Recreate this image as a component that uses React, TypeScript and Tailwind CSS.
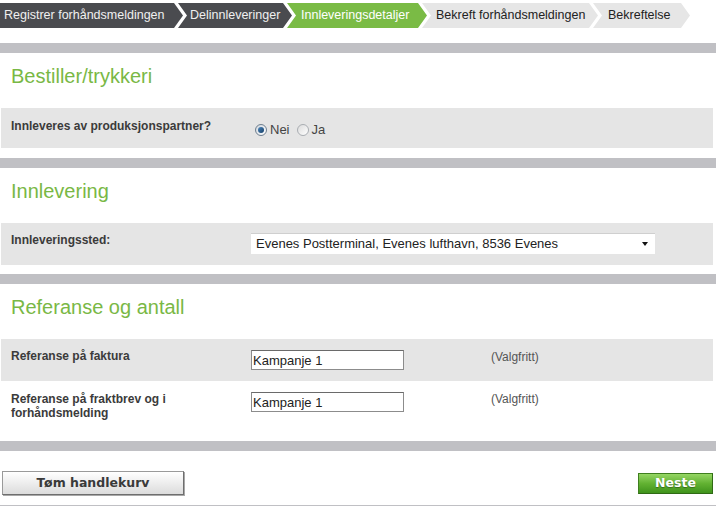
const steps = [
  { label: 'Registrer forhåndsmeldingen', w: 'w-[183px]', pl: 'pl-[4px]', tone: 'dark', first: true },
  { label: 'Delinnleveringer', w: 'w-[114px]', pl: 'pl-[12px]', tone: 'dark' },
  { label: 'Innleveringsdetaljer', w: 'w-[140px]', pl: 'pl-[14px]', tone: 'active' },
  { label: 'Bekreft forhåndsmeldingen', w: 'w-[176px]', pl: 'pl-[14px]', tone: 'todo' },
  { label: 'Bekreftelse', w: 'w-[97px]', pl: 'pl-[15px]', tone: 'todo' },
]

const toneClass: Record<string, string> = {
  dark: 'bg-[#4a4b4f] text-[#f0f0f0]',
  active: 'bg-[#7abb45] text-white',
  todo: 'bg-[#e6e6e6] text-[#222]',
}

function Steps() {
  return (
    <div className="mt-[3px] flex h-[25px]">
      {steps.map((s) => (
        <div
          key={s.label}
          className={`flex h-full shrink-0 items-center whitespace-nowrap text-[12.5px] ${s.w} ${s.pl} ${toneClass[s.tone]} ${
            s.first
              ? '[clip-path:polygon(0_0,calc(100%_-_9px)_0,100%_50%,calc(100%_-_9px)_100%,0_100%)]'
              : '-ml-[5px] [clip-path:polygon(0_0,calc(100%_-_9px)_0,100%_50%,calc(100%_-_9px)_100%,0_100%,9px_50%)]'
          }`}
        >
          {s.label}
        </div>
      ))}
    </div>
  )
}

function Separator({ className = '' }: { className?: string }) {
  return <div className={`h-[10px] bg-[#c0c0c4] ${className}`} />
}

function Heading({ children }: { children: string }) {
  return (
    <h2 className="pl-[11px] pt-[11px] pb-[20px] text-[20px] leading-[24px] text-[#79b845]">
      {children}
    </h2>
  )
}

function Radio({ checked, label }: { checked?: boolean; label: string }) {
  return (
    <label className="flex items-center gap-[3px] text-[13px] leading-[14px] text-[#444]">
      {checked ? (
        <span className="flex h-[12px] w-[12px] items-center justify-center rounded-full border border-[#6f7f8f] bg-linear-to-br from-[#cfd6de] to-white">
          <span className="h-[6px] w-[6px] rounded-full bg-linear-to-br from-[#4a86bd] to-[#173f66]" />
        </span>
      ) : (
        <span className="h-[12px] w-[12px] rounded-full border border-[#a9adb2] bg-linear-to-br from-[#dcdcdc] to-white" />
      )}
      {label}
    </label>
  )
}

function Label({ children, pt = 'pt-[10px]' }: { children: string; pt?: string }) {
  return <div className={`pl-[10px] pr-[6px] text-[12px] font-bold leading-[14px] text-[#3b3b3b] ${pt}`}>{children}</div>
}

function TextInput({ value }: { value: string }) {
  return (
    <input
      defaultValue={value}
      className="block h-[20px] w-[153px] border border-[#8c8c8c] border-t-[#6a6a6a] bg-white px-[1px] text-[13px] leading-[18px] text-[#222] outline-none"
    />
  )
}

export default function App() {
  return (
    <div className="h-[506px] w-[716px] overflow-hidden bg-white font-['Liberation_Sans',Arial,sans-serif]">
      <Steps />
      <Separator className="mt-[15px]" />

      <Heading>Bestiller/trykkeri</Heading>
      <div className="mb-[10px] ml-px mr-[3px] grid h-[40px] grid-cols-[250px_1fr] bg-[#e5e5e5]">
        <Label pt="pt-[11px]">Innleveres av produksjonspartner?</Label>
        <div className="flex items-start gap-[7px] pl-[4px] pt-[15px]">
          <Radio checked label="Nei" />
          <Radio label="Ja" />
        </div>
      </div>
      <Separator />

      <Heading>Innlevering</Heading>
      <div className="mb-[9px] ml-px mr-[3px] grid h-[42px] grid-cols-[250px_1fr] bg-[#e5e5e5]">
        <Label>Innleveringssted:</Label>
        <div className="pt-[10px]">
          <div className="flex h-[21px] w-[404px] items-center justify-between border-t border-[#cfcfcf] bg-white pl-[5px] pr-[7px] text-[13px] text-[#222]">
            <span>Evenes Postterminal, Evenes lufthavn, 8536 Evenes</span>
            <span className="h-0 w-0 border-x-[3.5px] border-t-[4px] border-x-transparent border-t-[#111]" />
          </div>
        </div>
      </div>
      <Separator />

      <Heading>Referanse og antall</Heading>
      <div className="ml-px mr-[3px] grid h-[42px] grid-cols-[250px_240px_1fr] bg-[#e5e5e5]">
        <Label>Referanse på faktura</Label>
        <div className="pt-[11px]">
          <TextInput value="Kampanje 1" />
        </div>
        <div className="pt-[11px] text-[12px] leading-[14px] text-[#555]">(Valgfritt)</div>
      </div>
      <div className="mb-[10px] ml-px mr-[3px] grid h-[50px] grid-cols-[250px_240px_1fr]">
        <Label pt="pt-[11px]">Referanse på fraktbrev og i forhåndsmelding</Label>
        <div className="pt-[11px]">
          <TextInput value="Kampanje 1" />
        </div>
        <div className="pt-[11px] text-[12px] leading-[14px] text-[#555]">(Valgfritt)</div>
      </div>
      <Separator />

      <div className="flex items-center justify-between border-b-2 border-[#c0c0c4] pt-[20px] pb-[10px] pl-[2px] pr-[3px] font-['DejaVu_Sans',Verdana,sans-serif] text-[12.5px] font-bold">
        <button className="h-[24px] w-[182px] border border-[#9a9a9a] border-r-[#6e6e6e] border-b-[#6e6e6e] bg-linear-to-b from-white to-[#dcdcdc] text-[#3a3a3a] shadow-[1px_1px_0_#a8a8a8]">
          Tøm handlekurv
        </button>
        <button className="h-[21px] w-[75px] border border-[#3f7f1f] border-r-[#2f6a14] border-b-[#2f6a14] bg-linear-to-b from-[#95d663] via-[#62b232] to-[#3f931b] text-white [text-shadow:0_1px_1px_rgba(0,0,0,0.35)]">
          Neste
        </button>
      </div>
    </div>
  )
}
